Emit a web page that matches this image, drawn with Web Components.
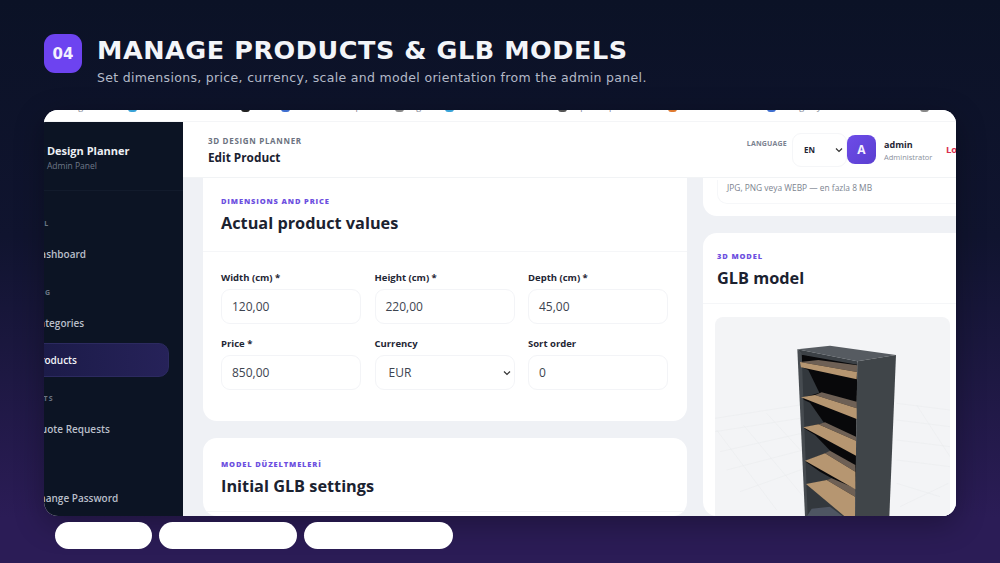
<!DOCTYPE html>
<html>
<head>
<meta charset="utf-8">
<style>
  html, body { margin: 0; height: 100%; }
  body { width: 1000px; height: 563px; overflow: hidden; background: linear-gradient(180deg, #0b1226 0%, #10142f 42%, #2b1c56 92%); }
</style>
</head>
<body>
<slide-page>
  <slide-head slot="head" num="04" title="MANAGE PRODUCTS &amp; GLB MODELS" sub="Set dimensions, price, currency, scale and model orientation from the admin panel."></slide-head>
  <admin-shot slot="shot"></admin-shot>
  <blank-pill slot="pills" style="width:97px"></blank-pill>
  <blank-pill slot="pills" style="width:138px"></blank-pill>
  <blank-pill slot="pills" style="width:149px"></blank-pill>
</slide-page>

<script>
class SlidePage extends HTMLElement {
  constructor() {
    super();
    this.attachShadow({ mode: 'open' });
    this.shadowRoot.innerHTML = `
      <style>
        :host { display: flex; flex-direction: column; width: 1000px; height: 563px; padding: 34px 44px 0; box-sizing: border-box; }
        .pills { display: flex; gap: 7px; margin: 6px 0 0 11px; }
      </style>
      <slot name="head"></slot>
      <slot name="shot"></slot>
      <div class="pills"><slot name="pills"></slot></div>
    `;
  }
}

class SlideHead extends HTMLElement {
  constructor() {
    super();
    this.attachShadow({ mode: 'open' });
    this.shadowRoot.innerHTML = `
      <style>
        :host { display: flex; gap: 15px; height: 76px; font-family: "DejaVu Sans", sans-serif; }
        .num { width: 38px; height: 39px; border-radius: 11px; background: #6d43f0; color: #f4f1ff; font-weight: 700; font-size: 15px; display: flex; align-items: center; justify-content: center; }
        h1 { margin: 0; font-size: 25.5px; line-height: 33px; font-weight: 700; letter-spacing: .54px; color: #f3f5f9; white-space: nowrap; }
        p { margin: 3px 0 0; font-size: 12.5px; line-height: 16px; letter-spacing: .32px; color: #b4bac8; white-space: nowrap; }
      </style>
      <div class="num">${this.getAttribute('num')}</div>
      <div>
        <h1>${this.getAttribute('title').replace('&', '&amp;')}</h1>
        <p>${this.getAttribute('sub')}</p>
      </div>
    `;
  }
}

class BlankPill extends HTMLElement {
  constructor() {
    super();
    this.attachShadow({ mode: 'open' });
    this.shadowRoot.innerHTML = `
      <style>
        :host { display: block; height: 27px; border-radius: 14px; background: #fff; }
      </style>
    `;
  }
}

class AdminShot extends HTMLElement {
  constructor() {
    super();
    this.attachShadow({ mode: 'open' });
    this.shadowRoot.innerHTML = `
      <style>
        :host { display: flex; flex-direction: column; height: 406px; border-radius: 14px; overflow: hidden; background: #fff; box-shadow: 0 8px 30px rgba(0,0,0,.3); font-family: "Open Sans", "Noto Sans", sans-serif; }
        .row { display: flex; flex: 1; min-height: 0; }
        .right { flex: 1; min-width: 0; display: flex; flex-direction: column; }
      </style>
      <book-marks></book-marks>
      <div class="row">
        <side-bar></side-bar>
        <div class="right">
          <top-bar></top-bar>
          <edit-area></edit-area>
        </div>
      </div>
    `;
  }
}

class BookMarks extends HTMLElement {
  constructor() {
    super();
    this.attachShadow({ mode: 'open' });
    // only the very bottom of this row shows, the shot is cropped through it
    const items = [[68,'','Design Hub'],[113,'#38a3d8','Resources Materials'],[40,'#222','Tools'],[114,'#3f6fd0','Elements Components'],[50,'#888','Sign'],[113,'#38a3d8','Product Assets'],[110,'#555','Square Space'],[99,'#e07a30','Creative'],[153,'#3f6fd0','Design System Docs'],[40,'#888','More']];
    this.shadowRoot.innerHTML = `
      <style>
        :host { display: block; height: 12px; overflow: hidden; background: #fff; border-bottom: 1px solid #f4f5f7; box-sizing: border-box; }
        .in { display: flex; margin: -9px 0 0 16px; font-size: 9px; line-height: 12px; color: #808695; white-space: nowrap; }
        span { display: flex; gap: 5px; align-items: center; flex: none; overflow: hidden; }
        i { width: 9px; height: 9px; border-radius: 3px; flex: none; }
      </style>
      <div class="in">${items.map(([w, c, t]) => `<span style="width:${w}px">${c ? `<i style="background:${c}"></i>` : ''}${t}</span>`).join('')}</div>
    `;
  }
}

class SideBar extends HTMLElement {
  constructor() {
    super();
    this.attachShadow({ mode: 'open' });
    this.shadowRoot.innerHTML = `
      <style>
        :host { display: block; flex: none; width: 139px; overflow: hidden; background: #0c1424; }
        .in { width: 179px; margin-left: -40px; box-sizing: border-box; padding: 21px 14px 0 43px; white-space: nowrap; }
        .brand { margin-left: -17.4px; font-size: 11px; line-height: 16px; font-weight: 700; color: #eef0f5; }
        .tag { font-size: 8.5px; line-height: 14px; color: #6f7888; }
        hr { border: 0; border-top: 1px solid #121b2c; margin: 17px -14px 28px -43px; }
        .sec { font-size: 7px; line-height: 10px; font-weight: 700; letter-spacing: 1.2px; color: #6b7485; }
        .item { display: block; margin-left: -28px; padding-left: 14px; height: 34px; line-height: 34px; font-size: 10px; font-weight: 600; color: #b9bfca; border-radius: 10px; box-sizing: border-box; }
        .on { line-height: 32px; background: linear-gradient(90deg, #1a1a46, #262259); border: 1px solid #2c2a60; color: #f1f2f7; }
      </style>
      <div class="in">
        <div class="brand">3D Design Planner</div>
        <div class="tag">Admin Panel</div>
        <hr>
        <div class="sec" style="margin-left:-38px">GENERAL</div>
        <div class="item" style="margin-top:8px">Dashboard</div>
        <div class="sec" style="margin:17px 0 0 -37px">CATALOG</div>
        <div class="item" style="margin-top:8px">Categories</div>
        <div class="item on" style="margin-top:3px">Products</div>
        <div class="sec" style="margin:17px 0 0 -38px">REQUESTS</div>
        <div class="item" style="margin-top:8px">Quote Requests</div>
        <div class="item" style="margin-top:35px">Change Password</div>
      </div>
    `;
  }
}

class TopBar extends HTMLElement {
  constructor() {
    super();
    this.attachShadow({ mode: 'open' });
    this.shadowRoot.innerHTML = `
      <style>
        :host { display: flex; align-items: center; height: 56px; flex: none; box-sizing: border-box; padding: 0 0 0 25px; background: #fff; border-bottom: 1px solid #f1f3f5; overflow: hidden; white-space: nowrap; }
        .kick { font-size: 8px; line-height: 12px; font-weight: 700; letter-spacing: .68px; color: #6b7280; }
        .ttl { font-size: 11.8px; line-height: 18px; font-weight: 700; color: #1a2130; margin-top: 1px; }
        .head { flex: 1; margin-top: 2px; }
        .lang { font-size: 7px; font-weight: 700; letter-spacing: .2px; color: #7b8290; margin: -12px 5px 0 0; }
        .sel { width: 55px; height: 34px; box-sizing: border-box; padding: 0 0 0 11px; border: 1px solid #f5f6f8; border-radius: 9px; display: flex; align-items: center; justify-content: space-between; font-size: 8px; font-weight: 700; color: #1f2735; }
        .sel svg { margin-right: 3px; }
        .av { width: 29px; height: 29px; border-radius: 8px; background: linear-gradient(135deg, #6d4ce8, #5b3fd0); color: #f4f1ff; font-weight: 700; font-size: 12px; display: flex; align-items: center; justify-content: center; }
        .who { margin-left: 8px; width: 62px; padding-top: 2px; }
        .nm { font-size: 9px; line-height: 13px; font-weight: 700; color: #1f2735; }
        .rl { font-size: 7.5px; line-height: 12px; color: #8a909c; }
        .out { font-size: 9.5px; font-weight: 700; color: #d9304f; width: 10px; overflow: hidden; }
      </style>
      <div class="head">
        <div class="kick">3D DESIGN PLANNER</div>
        <div class="ttl">Edit Product</div>
      </div>
      <div class="lang">LANGUAGE</div>
      <div class="sel">EN<svg width="8" height="6" viewBox="0 0 8 6"><path d="M1 1.5l3 3 3-3" fill="none" stroke="#333" stroke-width="1.2"/></svg></div>
      <div class="av">A</div>
      <div class="who"><div class="nm">admin</div><div class="rl">Administrator</div></div>
      <div class="out">Logout</div>
    `;
  }
}

class EditArea extends HTMLElement {
  constructor() {
    super();
    this.attachShadow({ mode: 'open' });
    this.shadowRoot.innerHTML = `
      <style>
        :host { display: flex; flex: 1; min-height: 0; gap: 16px; padding: 0 0 0 20px; background: #eff1f5; overflow: hidden; }
        .col1 { width: 484px; flex: none; display: flex; flex-direction: column; gap: 17px; }
        .col2 { width: 280px; flex: none; display: flex; flex-direction: column; gap: 17px; }
        .f1 { height: 243px; border-radius: 0 0 14px 14px; }
        .f2 { flex: 1; --pad: 20px; }
        .grid { display: grid; grid-template-columns: repeat(3, 140px); column-gap: 13.5px; row-gap: 13px; padding: 19px 19px 0 18px; }
        .up { background: #fff; height: 38px; border-radius: 0 0 14px 14px; flex: none; box-sizing: border-box; padding: 2px 0 0 14px; }
        .up div { width: 231px; border: 1px solid #f6f7f9; border-top: 0; border-radius: 0 0 10px 10px; height: 23px; padding: 0 9px; font-size: 8.4px; line-height: 15px; color: #7d8490; }
        .card3 { flex: 1; }
        .view { margin: 13px 0 0 12px; width: 235px; height: 220px; border-radius: 8px 8px 0 0; background: #f3f4f6; overflow: hidden; }
        svg { display: block; }
      </style>
      <div class="col1">
        <form-card class="f1" kicker="DIMENSIONS AND PRICE" heading="Actual product values">
          <div class="grid">
            <form-field label="Width (cm) *" value="120,00"></form-field>
            <form-field label="Height (cm) *" value="220,00"></form-field>
            <form-field label="Depth (cm) *" value="45,00"></form-field>
            <form-field label="Price *" value="850,00"></form-field>
            <form-field label="Currency" value="EUR" select></form-field>
            <form-field label="Sort order" value="0"></form-field>
          </div>
        </form-card>
        <form-card class="f2" kicker="MODEL DÜZELTMELERİ" heading="Initial GLB settings"></form-card>
      </div>
      <div class="col2">
        <div class="up"><div>JPG, PNG veya WEBP — en fazla 8 MB</div></div>
        <form-card class="card3" kicker="3D MODEL" heading="GLB model" compact>
          <div class="view">
            <svg width="235" height="200" viewBox="-225 -69 705 600">
              <g transform="translate(-270 -90)" fill="none" stroke="#e8eaed" stroke-width="1.5">
                <path d="M45 325L300 285M45 365L300 325M60 425L305 370M80 480L310 420M120 545L315 475M50 360L230 600M130 345L310 560M200 310L310 430M590 280L750 300M590 330L750 350M590 390L750 410M590 450L750 470M590 520L720 560M600 590L745 520M650 285L750 440"/>
              </g>
              <!-- back wall -->
              <polygon points="33,42 202,70 196,530 50,530" fill="#08080a"/>
              <!-- lit part of the left wall, one piece per compartment -->
              <g fill="#33383d">
                <polygon points="33,80 55,90 88,158 33,175"/>
                <polygon points="35,176 60,188 102,248 40,264"/>
                <polygon points="40,264 75,285 122,334 45,364"/>
                <polygon points="45,364 90,395 128,416 48,434"/>
                <polygon points="48,432 120,470 165,530 50,530"/>
              </g>
              <!-- carcass -->
              <polygon points="22,28 120,17 318,45 202,64" fill="#565b61"/>
              <polygon points="22,28 202,64 202,74 35,44" fill="#3c4146"/>
              <polygon points="22,28 35,40 53,530 45,530" fill="#464b50"/>
              <polygon points="202,64 318,45 298,530 195,530" fill="#404549"/>
              <!-- shelves -->
              <g fill="#6e6055">
                <polygon points="30,66 85,60 202,76 201,96"/>
                <polygon points="75,165 95,157 200,185 200,205"/>
                <polygon points="85,253 105,247 198,290 198,302"/>
                <polygon points="105,340 120,332 196,375 196,395"/>
                <polygon points="110,420 125,415 195,445 195,470"/>
              </g>
              <g fill="#b69671">
                <polygon points="30,66 201,96 200,118 33,82"/>
                <polygon points="33,172 75,165 200,205 200,237"/>
                <polygon points="40,262 85,253 198,302 198,347"/>
                <polygon points="45,362 105,340 196,395 196,448"/>
                <polygon points="48,432 110,420 195,470 195,530 165,530"/>
              </g>
              <polygon points="50,530 65,506 120,500 160,530" fill="#4e5562"/>
            </svg>
          </div>
        </form-card>
      </div>
    `;
  }
}

class FormCard extends HTMLElement {
  constructor() {
    super();
    this.attachShadow({ mode: 'open' });
    const compact = this.hasAttribute('compact');
    this.shadowRoot.innerHTML = `
      <style>
        :host { display: block; background: #fff; border-radius: 14px; overflow: hidden; }
        header { padding: var(--pad, 17px) ${compact ? '14px' : '18px'} 0; height: ${compact ? 71 : 74}px; box-sizing: border-box; border-bottom: 1px solid #f5f6f8; }
        .k { font-size: 7.5px; line-height: 12px; font-weight: 800; letter-spacing: .85px; color: #6d4fe0; white-space: nowrap; }
        h2 { margin: 4px 0 0; font-size: 16.3px; line-height: 24px; font-weight: 700; color: #1b2230; white-space: nowrap; }
      </style>
      <header>
        <div class="k">${this.getAttribute('kicker')}</div>
        <h2>${this.getAttribute('heading')}</h2>
      </header>
      <slot></slot>
    `;
  }
}

class FormField extends HTMLElement {
  constructor() {
    super();
    this.attachShadow({ mode: 'open' });
    const isSelect = this.hasAttribute('select');
    this.shadowRoot.innerHTML = `
      <style>
        :host { display: block; white-space: nowrap; }
        label { display: block; font-size: 9.5px; line-height: 14px; font-weight: 700; color: #1f2735; margin-bottom: 4px; }
        .box { height: 35px; box-sizing: border-box; border: 1px solid #f3f4f7; border-radius: 9px; padding: 0 ${isSelect ? 3 : 10}px 0 ${isSelect ? 13 : 10}px; display: flex; align-items: center; justify-content: space-between; font-size: 12px; color: #3d4450; background: #fff; }
      </style>
      <label>${this.getAttribute('label')}</label>
      <div class="box"><span>${this.getAttribute('value')}</span>${isSelect ? '<svg width="8" height="6" viewBox="0 0 8 6"><path d="M1 1.5l3 3 3-3" fill="none" stroke="#333" stroke-width="1.2"/></svg>' : ''}</div>
    `;
  }
}

customElements.define('slide-page', SlidePage);
customElements.define('slide-head', SlideHead);
customElements.define('blank-pill', BlankPill);
customElements.define('admin-shot', AdminShot);
customElements.define('book-marks', BookMarks);
customElements.define('side-bar', SideBar);
customElements.define('top-bar', TopBar);
customElements.define('edit-area', EditArea);
customElements.define('form-card', FormCard);
customElements.define('form-field', FormField);
</script>
</body>
</html>
